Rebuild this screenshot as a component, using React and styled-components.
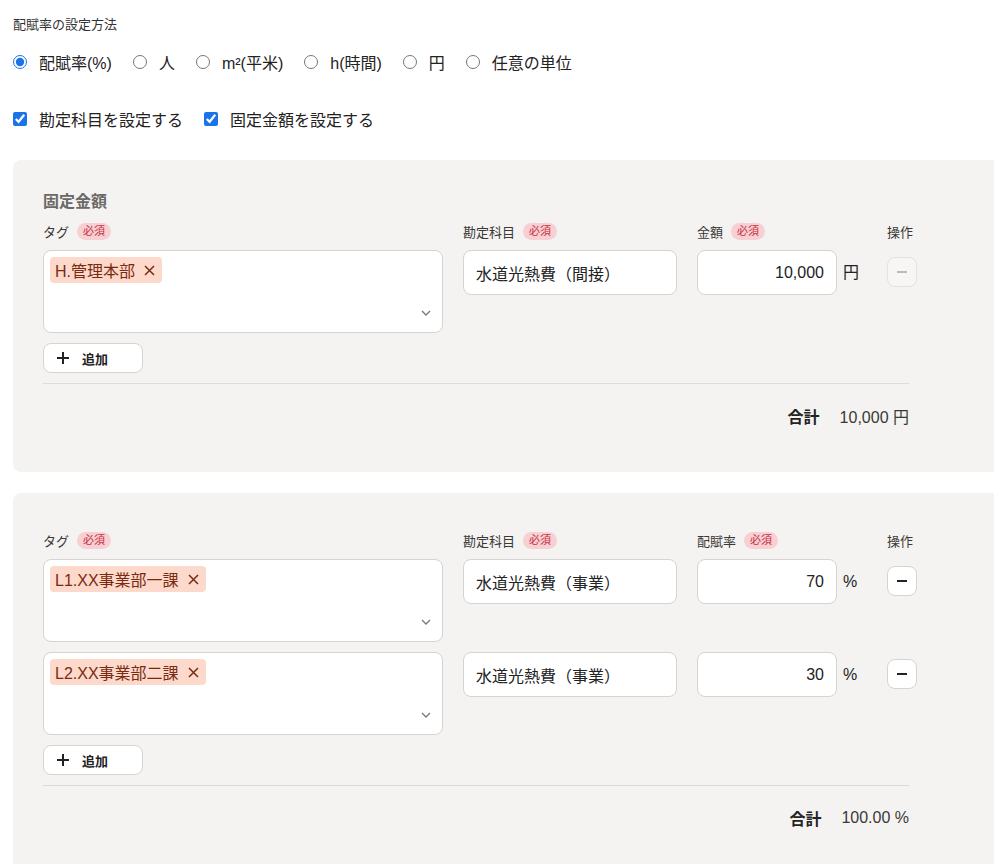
import React from "react";
import styled, { createGlobalStyle } from "styled-components";

const Global = createGlobalStyle`
  html, body { margin: 0; padding: 0; background: #fff; overflow-x: hidden; }
  body { font-family: "Liberation Sans", "Noto Sans CJK JP", sans-serif; color: #23221e; }
`;

const Page = styled.div`
  padding: 14px 0 12px 13px;
  width: 1020px;
`;
const Heading = styled.div`font-size: 13px; color: #333; line-height: 22px;`;
const OptionRow = styled.div`
  display: flex; align-items: center; gap: 21px; margin-top: 14px; height: 24px;
  & + & { margin-top: 33px; }
`;
const Option = styled.label`
  display: flex; align-items: center; gap: 12px; font-size: 16px; color: #23221e;
  input { margin: 0; width: 14px; height: 14px; accent-color: #1a73e8; }
`;
const Card = styled.section`
  background: #f4f3f2; border-radius: 8px; width: 1010px;
  padding: ${p => p.$top}px 0 24px 30px; box-sizing: border-box;
  margin-top: ${p => p.$mt}px;
`;
const Inner = styled.div`width: 866px;`;
const CardTitle = styled.div`font-size: 16px; font-weight: bold; color: #6b6966; line-height: 24px; margin-bottom: 8px;`;
const Grid = styled.div`
  display: grid; grid-template-columns: 400px 214px 140px 30px 32px;
  column-gap: 20px; row-gap: 10px; align-items: start;
`;
const LabelRow = styled.div`
  font-size: 13px; color: #3a3936; display: flex; align-items: center; gap: 8px; height: 18px;
  grid-column: ${p => p.$span || "auto"};
`;
const Req = styled.span`
  background: #f8cfd3; color: #c3303f; font-size: 11px; border-radius: 9px; padding: 1px 6px; line-height: 15px;
`;
const TagBox = styled.div`
  height: 83px; box-sizing: border-box; background: #fff; border: 1px solid #d6d4d1; border-radius: 8px;
  padding: 6px; position: relative;
`;
const Chevron = styled.svg`position: absolute; right: 10px; bottom: 15px;`;
const Chip = styled.span`
  display: inline-flex; align-items: center; gap: 9px; background: #fcd9cb; color: #7a2a10;
  font-size: 16px; height: 26px; padding: 0 7px 0 5px; border-radius: 4px;
`;
const Input = styled.div`
  height: 45px; box-sizing: border-box; background: #fff; border: 1px solid #d6d4d1; border-radius: 8px;
  display: flex; align-items: center; padding: 0 12px; font-size: 16px;
  justify-content: ${p => (p.$right ? "flex-end" : "flex-start")};
`;
const Unit = styled.span`font-size: 16px; line-height: 45px; margin-left: -14px;`;
const OpButton = styled.button`
  width: 30px; height: 30px; margin: 7px 0 0 -20px; border-radius: 8px; box-sizing: border-box;
  border: 1px solid ${p => (p.$disabled ? "#e4e2df" : "#d6d4d1")};
  background: ${p => (p.$disabled ? "#f7f6f5" : "#fff")};
  display: flex; align-items: center; justify-content: center; padding: 0;
`;
const OpLabel = styled(LabelRow)`margin-left: -20px;`;
const AddButton = styled.button`
  margin-top: 10px; width: 100px; height: 30px; border: 1px solid #d6d4d1; border-radius: 8px; background: #fff;
  display: flex; align-items: center; gap: 12px; padding: 0 12px; font-family: inherit; font-size: 13px;
  font-weight: bold; color: #23221e;
`;
const Divider = styled.hr`border: 0; border-top: 1px solid #dedcd9; margin: 10px 0 0;`;
const Total = styled.div`
  display: flex; justify-content: flex-end; align-items: center; gap: 20px; height: 64px; font-size: 16px; color: #3a3936;
  b { font-weight: bold; color: #23221e; }
`;

const Minus = ({ c }) => (
  <svg width="14" height="14" viewBox="0 0 14 14"><path d="M2 7h10" stroke={c} strokeWidth="2" /></svg>
);
const X = () => (
  <svg width="11" height="11" viewBox="0 0 11 11"><path d="M1 1l9 9M10 1l-9 9" stroke="#7a2a10" strokeWidth="1.5" /></svg>
);

const Row = ({ tag, account, value, unit, disabled }) => (
  <>
    <TagBox>
      <Chip>{tag}<X /></Chip>
      <Chevron width="12" height="8" viewBox="0 0 12 8"><path d="M2 2l4 4 4-4" fill="none" stroke="#777" strokeWidth="1.3" /></Chevron>
    </TagBox>
    <Input>{account}</Input>
    <Input $right>{value}</Input>
    <Unit>{unit}</Unit>
    <OpButton $disabled={disabled}><Minus c={disabled ? "#bbb" : "#23221e"} /></OpButton>
  </>
);

const Labels = ({ amount }) => (
  <>
    <LabelRow>タグ <Req>必須</Req></LabelRow>
    <LabelRow>勘定科目 <Req>必須</Req></LabelRow>
    <LabelRow>{amount} <Req>必須</Req></LabelRow>
    <LabelRow />
    <OpLabel>操作</OpLabel>
  </>
);

const Add = () => (
  <AddButton>
    <svg width="14" height="14" viewBox="0 0 14 14"><path d="M7 1v12M1 7h12" stroke="#23221e" strokeWidth="2" /></svg>
    追加
  </AddButton>
);

export default function App() {
  const radios = ["配賦率(%)", "人", "m²(平米)", "h(時間)", "円", "任意の単位"];
  return (
    <Page>
      <Global />
      <Heading>配賦率の設定方法</Heading>
      <OptionRow>
        {radios.map((r, i) => (
          <Option key={r}><input type="radio" name="m" defaultChecked={i === 0} />{r}</Option>
        ))}
      </OptionRow>
      <OptionRow>
        <Option><input type="checkbox" defaultChecked />勘定科目を設定する</Option>
        <Option><input type="checkbox" defaultChecked />固定金額を設定する</Option>
      </OptionRow>
      <Card $top={30} $mt={29}>
        <Inner>
          <CardTitle>固定金額</CardTitle>
          <Grid>
            <Labels amount="金額" />
            <Row tag="H.管理本部" account="水道光熱費（間接）" value="10,000" unit="円" disabled />
          </Grid>
          <Add />
          <Divider />
          <Total><b>合計</b><span>10,000 円</span></Total>
        </Inner>
      </Card>
      <Card $top={38} $mt={21}>
        <Inner>
          <Grid>
            <Labels amount="配賦率" />
            <Row tag="L1.XX事業部一課" account="水道光熱費（事業）" value="70" unit="%" />
            <Row tag="L2.XX事業部二課" account="水道光熱費（事業）" value="30" unit="%" />
          </Grid>
          <Add />
          <Divider />
          <Total><b>合計</b><span>100.00 %</span></Total>
        </Inner>
      </Card>
    </Page>
  );
}
